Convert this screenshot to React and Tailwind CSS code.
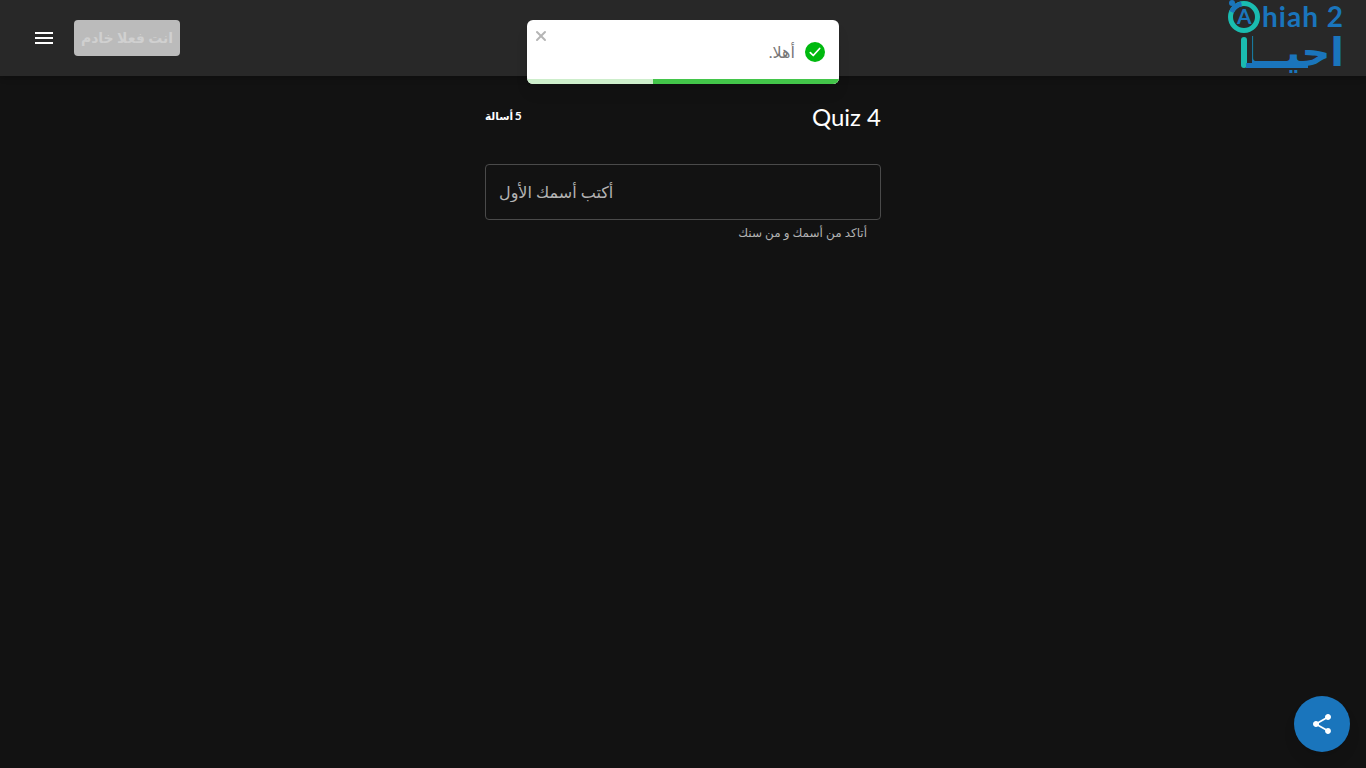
import { X } from "lucide-react";

function Logo() {
  return (
    <div className="relative w-[118px] h-[76px] shrink-0 self-start" dir="ltr">
      <span className="absolute right-0 top-[33px] text-[40px] leading-[38px] font-bold text-[#1a75bc] font-['DejaVu_Sans',sans-serif] whitespace-nowrap" dir="rtl">
        احيــا
      </span>
      <svg width="118" height="76" viewBox="0 0 118 76" className="absolute left-0 top-0">
        {/* magnifier ring */}
        <circle cx="18" cy="17" r="13.5" fill="none" stroke="#1abcb0" strokeWidth="5" />
        <path d="M5.5 12 A13.5 13.5 0 0 1 15.5 4" fill="none" stroke="#1a75bc" strokeWidth="5" />
        <circle cx="6" cy="3" r="3" fill="#1a75bc" />
        <rect x="8" y="33" width="18" height="30" fill="#282828" />
        <rect x="15" y="37" width="6" height="31" rx="3" fill="#1abcb0" />
        <rect x="20" y="63" width="62" height="5" fill="#1a75bc" />
      </svg>
      <span className="absolute left-[11px] top-[4px] text-[21px] leading-6 font-bold text-[#1a75bc] font-['Lato',sans-serif]">
        A
      </span>
      <span className="absolute right-0 top-[2px] text-[28px] leading-[29px] font-bold tracking-[1px] text-[#1a75bc] font-['Lato',sans-serif] whitespace-nowrap">
        hiah 2
      </span>
    </div>
  );
}

export default function App() {
  return (
    <div className="min-h-[768px] bg-[#121212] font-['Lato','DejaVu_Sans',sans-serif] text-white">
      {/* Top bar */}
      <header className="h-[76px] bg-[#282828] shadow-md flex items-center justify-between pl-6 pr-[22px]">
        <div className="flex items-center gap-[10px]">
          <button className="w-10 h-10 flex items-center justify-center">
            <svg width="24" height="24" viewBox="0 0 24 24" fill="#fff">
              <path d="M3 18h18v-2H3v2zm0-5h18v-2H3v2zm0-7v2h18V6H3z" />
            </svg>
          </button>
          <button className="h-9 w-[106px] rounded bg-[#bbbbbb] text-[#d0d0d0] text-sm font-bold flex items-center justify-center" dir="rtl">
            انت فعلا خادم
          </button>
        </div>
        <Logo />
      </header>

      {/* Toast */}
      <div className="absolute left-[527px] top-5 w-[312px] h-16 bg-white rounded-md overflow-hidden shadow-lg">
        <X size={16} strokeWidth={3} className="absolute left-[6px] top-2 text-[#b5b5b5]" />
        <div className="h-full flex items-center justify-start gap-[10px] pr-[14px]" dir="rtl">
          <span className="w-5 h-5 rounded-full bg-[#00b90f] flex items-center justify-center">
            <svg width="14" height="14" viewBox="0 0 24 24" fill="none" stroke="#fff" strokeWidth="3" strokeLinecap="round" strokeLinejoin="round">
              <path d="M4 13l5 5L20 6" />
            </svg>
          </span>
          <span className="text-base text-[#777777]">أهلا.</span>
        </div>
        <div className="absolute left-0 right-0 bottom-0 h-[5px] bg-[#cdeecb] flex justify-end">
          <div className="w-[186px] bg-[#43c54a]" />
        </div>
      </div>

      {/* Quiz */}
      <main className="w-[396px] mx-auto pt-[27px]" dir="rtl">
        <div className="flex items-start justify-between">
          <h1 className="text-2xl leading-7" dir="ltr">Quiz 4</h1>
          <span className="text-[10.5px] font-bold leading-6 pt-px [word-spacing:-1px]"><span className="text-xs">5</span> أسالة</span>
        </div>
        <div className="mt-[33px] h-14 border border-[#4a4a4a] rounded flex items-center px-[13px]">
          <input
            readOnly
            placeholder="أكتب أسمك الأول"
            className="w-full bg-transparent outline-none text-base text-left placeholder:text-[#b3b3b3]"
            dir="ltr"
          />
        </div>
        <p className="mt-1 px-[14px] text-xs leading-[18px] text-[#b3b3b3]">أتاكد من أسمك و من سنك</p>
      </main>

      {/* Share */}
      <button className="fixed right-4 bottom-4 w-14 h-14 rounded-full bg-[#1a75bc] flex items-center justify-center shadow-lg">
        <svg width="24" height="24" viewBox="0 0 24 24" fill="#fff">
          <path d="M18 16.08c-.76 0-1.44.3-1.96.77L8.91 12.7c.05-.23.09-.46.09-.7s-.04-.47-.09-.7l7.05-4.11c.54.5 1.25.81 2.04.81 1.66 0 3-1.34 3-3s-1.34-3-3-3-3 1.34-3 3c0 .24.04.47.09.7L8.04 9.81C7.5 9.31 6.79 9 6 9c-1.66 0-3 1.34-3 3s1.34 3 3 3c.79 0 1.5-.31 2.04-.81l7.12 4.16c-.05.21-.08.43-.08.65 0 1.61 1.31 2.92 2.92 2.92s2.92-1.31 2.92-2.92-1.31-2.92-2.92-2.92z" />
        </svg>
      </button>
    </div>
  );
}
